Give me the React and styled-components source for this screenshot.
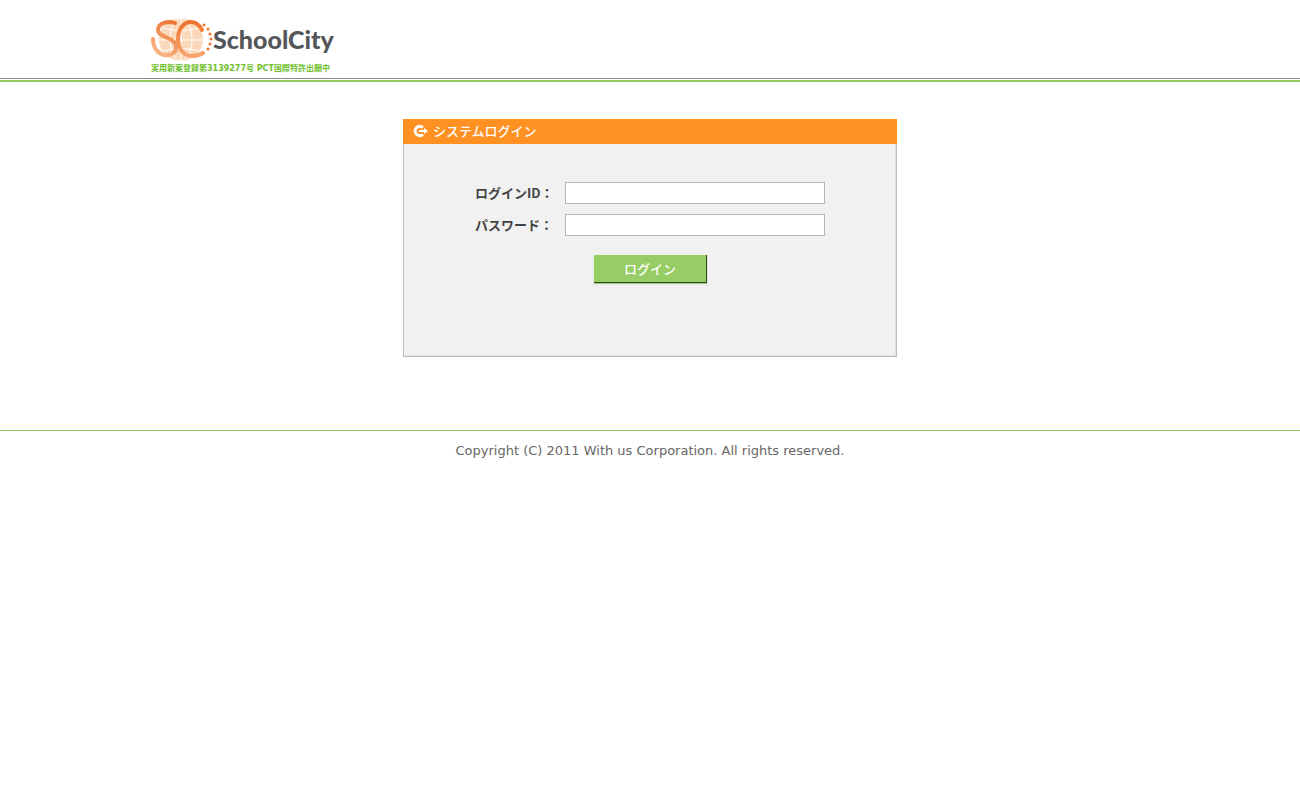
import React from 'react';
import styled, { createGlobalStyle } from 'styled-components';

const GlobalStyle = createGlobalStyle`
  body {
    margin: 0;
    background: #fff;
    color: #444;
    font-family: Verdana, 'DejaVu Sans', 'Noto Sans CJK JP', sans-serif;
    font-size: 13px;
    line-height: 20px;
  }
`;

const Header = styled.header`
  border-bottom: 2px solid #92cd62;
`;

const HeaderRule = styled.div`
  margin-bottom: 1px;
  border-bottom: 1px solid #8c8c8c;
`;

const HeaderInner = styled.div`
  box-sizing: border-box;
  width: 100%;
  max-width: 1000px;
  height: 78px;
  margin: 0 auto;
  padding-top: 16px;
`;

const LogoLink = styled.a`
  display: inline-flex;
  flex-direction: column;
  text-decoration: none;
`;

const LogoRow = styled.span`
  display: flex;
  align-items: center;
  height: 46px;
`;

const LogoMark = styled.svg`
  display: block;
  width: 63px;
  height: 46px;
`;

const LogoName = styled.span`
  color: #54575a;
  font-family: Lato, sans-serif;
  font-size: 25px;
  font-weight: 900;
  line-height: 46px;
`;

const LogoNote = styled.span`
  padding-left: 1px;
  color: #6fc02c;
  font-family: 'DejaVu Sans', 'Noto Sans CJK JP', sans-serif;
  font-size: 8px;
  font-weight: 700;
  line-height: 14px;
  white-space: nowrap;
`;

const Main = styled.main`
  padding: 37px 0 73px;
`;

const Panel = styled.section`
  box-sizing: border-box;
  width: 100%;
  max-width: 494px;
  margin: 0 auto;
`;

const PanelTitle = styled.h1`
  display: flex;
  align-items: center;
  gap: 5px;
  box-sizing: border-box;
  height: 25px;
  margin: 0;
  padding: 0 0 1px 10px;
  background: #ff9022;
  color: #fff;
  font-family: 'Noto Sans CJK JP', sans-serif;
  font-size: 13px;
  font-weight: 500;
`;

const Form = styled.form`
  box-sizing: border-box;
  min-height: 213px;
  padding: 38px 71px 0;
  border: 1px solid #bcbcbc;
  border-top: 0;
  background: #f1f1f1;
  box-shadow: inset -1px -1px 0 #e2e2e2;
  display: flex;
  flex-direction: column;
  gap: 10px;
`;

const Field = styled.div`
  display: flex;
  align-items: center;
`;

const Label = styled.label`
  flex: none;
  width: 90px;
  color: #444;
  font-family: 'Noto Sans CJK JP', sans-serif;
  font-weight: 700;
  white-space: nowrap;
`;

const TextInput = styled.input`
  box-sizing: border-box;
  flex: 1;
  min-width: 0;
  height: 22px;
  padding: 0 4px;
  border: 1px solid #b5b5b5;
  background: #fff;
  font: inherit;
`;

const LoginButton = styled.button`
  align-self: center;
  width: 113px;
  height: 28px;
  margin-top: 9px;
  padding: 0 0 2px;
  border: 0;
  background: #96ce65;
  box-shadow: inset -1px -1px 0 #2c4419, 0 1px 1px #a9c98b;
  color: #fff;
  font-family: 'Noto Sans CJK JP', sans-serif;
  font-size: 13px;
  font-weight: 500;
  cursor: pointer;
`;

const Footer = styled.footer`
  padding: 10px 0;
  border-top: 1px solid #92cd62;
  color: #666;
  text-align: center;
`;

const dots = [[54, 9], [58, 13], [60, 18], [61, 23], [60, 28], [58, 33]];

function Mark() {
  return (
    <LogoMark viewBox="0 0 63 46" aria-hidden="true">
      <defs>
        <linearGradient id="letter-s" gradientUnits="userSpaceOnUse" x1="3" y1="38" x2="24" y2="6">
          <stop offset="0" stopColor="#f9b98c" />
          <stop offset="1" stopColor="#ed7430" />
        </linearGradient>
        <linearGradient id="letter-c" gradientUnits="userSpaceOnUse" x1="40" y1="42" x2="40" y2="6">
          <stop offset="0" stopColor="#f7a872" />
          <stop offset="1" stopColor="#ed7430" />
        </linearGradient>
      </defs>
      <ellipse cx="31" cy="23.500" rx="22" ry="21.500" fill="#fcd8bb" />
      <g fill="none" stroke="#fff" strokeWidth="1">
        <ellipse cx="31" cy="23.500" rx="11" ry="21.500" />
        <path d="M31 2V45M13 12Q31 17 49 12M9 24H53M13 35Q31 30 49 35" />
      </g>
      <g fill="none" strokeWidth="4" strokeLinecap="round">
        <path d="M25 7C17 4 8 8 8 14C8 22 26 21 26 31C26 43 3 43 3 23" stroke="url(#letter-s)" />
        <path d="M52 14C49 8 44 6 41 6C33 6 28 14 28 23C28 33 34 40 42 40C47 40 50 39 53 37" stroke="url(#letter-c)" />
      </g>
      {dots.map(([cx, cy]) => <circle key={cy} cx={cx} cy={cy} r="1.500" fill="#f3752c" />)}
    </LogoMark>
  );
}

function LoginIcon() {
  return (
    <svg width="15" height="14" viewBox="0 0 15 14" fill="none" stroke="#fff" aria-hidden="true">
      <path d="M10 3.500A4.700 4.700 0 1 0 10 10.500" strokeWidth="3" />
      <path d="M6 7H12" strokeWidth="2" />
      <path d="M11 4L15 7L11 10Z" fill="#fff" stroke="none" />
    </svg>
  );
}

export default function App() {
  return (
    <>
      <GlobalStyle />
      <Header>
        <HeaderRule>
          <HeaderInner>
            <LogoLink href="#">
              <LogoRow>
                <Mark />
                <LogoName>SchoolCity</LogoName>
              </LogoRow>
              <LogoNote>実用新案登録第3139277号 PCT国際特許出願中</LogoNote>
            </LogoLink>
          </HeaderInner>
        </HeaderRule>
      </Header>
      <Main>
        <Panel>
          <PanelTitle>
            <LoginIcon />
            システムログイン
          </PanelTitle>
          <Form onSubmit={(event) => event.preventDefault()}>
            <Field>
              <Label htmlFor="login-id">ログインID：</Label>
              <TextInput id="login-id" type="text" />
            </Field>
            <Field>
              <Label htmlFor="password">パスワード：</Label>
              <TextInput id="password" type="password" />
            </Field>
            <LoginButton type="submit">ログイン</LoginButton>
          </Form>
        </Panel>
      </Main>
      <Footer>Copyright (C) 2011 With us Corporation. All rights reserved.</Footer>
    </>
  );
}
